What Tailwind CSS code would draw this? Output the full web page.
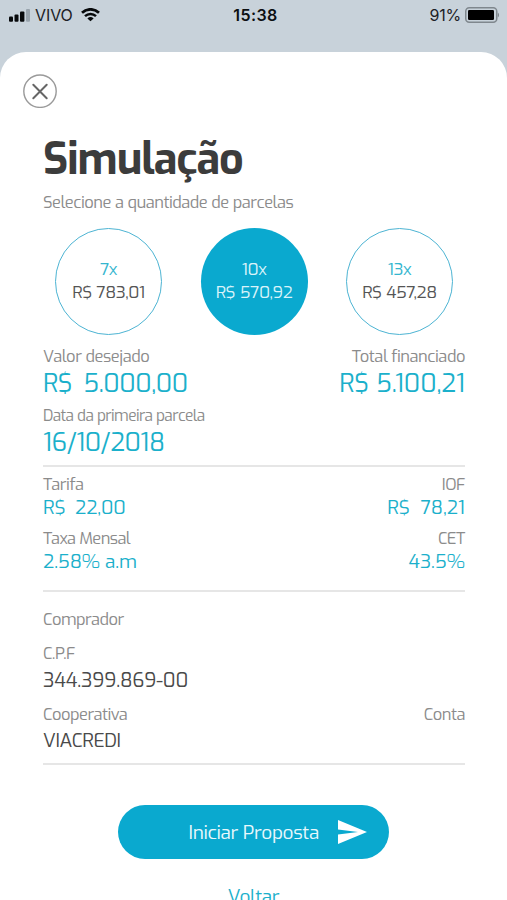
<!DOCTYPE html>
<html lang="pt-BR">
<head>
    <meta charset="UTF-8">
    <meta name="viewport" content="width=device-width, initial-scale=1.0">
    <title>Simulação</title>
    <script src="https://cdn.jsdelivr.net/npm/@tailwindcss/browser@4"></script>
</head>
<body class="h-[900px] overflow-hidden bg-[#c8d2da] font-[Exo,'Exo_2',Roboto,sans-serif] text-[#8b8b8b] antialiased">

    <!-- Status bar -->
    <header class="grid h-[52px] grid-cols-3 px-[8px] pt-[5px] font-[Inter,sans-serif] text-[16px] leading-5 text-[#1c2126]">
        <div class="flex h-5 items-center">
            <svg class="h-[14px] w-[22px]" viewBox="0 0 22 14">
                <rect x="1" y="8.5" width="4" height="5.2" rx="1" fill="#07090b"/>
                <rect x="6.5" y="6.5" width="4" height="7.2" rx="1" fill="#07090b"/>
                <rect x="12" y="3.5" width="4.4" height="10.2" rx="1" fill="#07090b"/>
                <rect x="18" y="1" width="4" height="12.7" rx="1" fill="#98a3ac"/>
            </svg>
            <span class="ml-[5px] tracking-[-0.1px]">VIVO</span>
            <svg class="ml-[8px] h-[14px] w-[19px]" viewBox="0 0 19 14">
                <path d="M1 4.7a12.3 12.3 0 0 1 17 0" fill="none" stroke="#07090b" stroke-width="2.7"/>
                <path d="M4 8.2a8 8 0 0 1 11 0" fill="none" stroke="#07090b" stroke-width="2.5"/>
                <path d="M9.5 13.3 6.4 10.4a4.5 4.5 0 0 1 6.2 0Z" fill="#07090b"/>
            </svg>
        </div>
        <div class="text-center font-semibold tracking-[0.4px] text-[#0c0f12]"><span class="pl-[4px]">15:38</span></div>
        <div class="flex h-5 items-center justify-end">
            <span class="tracking-[-0.2px]">91%</span>
            <svg class="ml-[4px] h-[16px] w-[34px]" viewBox="0 0 34 16">
                <rect x="0.75" y="0.75" width="31" height="14.5" rx="3.5" fill="none" stroke="#7f878d" stroke-width="1.5"/>
                <rect x="3" y="3" width="26" height="10" rx="1.2" fill="#000"/>
                <path d="M32.8 5.5c1.7.8 1.7 4.2 0 5Z" fill="#7f878d"/>
            </svg>
        </div>
    </header>

    <main class="h-[848px] rounded-t-[26px] bg-white pt-[22px]">
        <button class="ml-[23px] block size-[34px]" aria-label="Fechar">
            <svg class="size-[34px]" viewBox="0 0 34 34" fill="none">
                <circle cx="17" cy="17.2" r="16.2" stroke="#9a9a9a" stroke-width="1.4"/>
                <path d="M10.3 10.8 23.7 24.2M23.7 10.8 10.3 24.2" stroke="#666" stroke-width="2" stroke-linecap="round"/>
            </svg>
        </button>

        <div class="pt-[28px] pr-[42px] pl-[43px]">
            <h1 class="h-[48px] text-[43px] leading-[48px] font-bold tracking-[-1px] text-[#3c3c3c]">Simulação</h1>
            <p class="mt-[8px] h-5 text-[16.5px] leading-5 tracking-[-0.48px] whitespace-nowrap">Selecione a quantidade de parcelas</p>

            <!-- Parcelas -->
            <div class="mt-[16px] flex justify-between px-[12px] text-[17px] leading-[23px] tracking-[-0.4px] text-[#555]">
                <div class="flex size-[107px] flex-col items-center justify-center rounded-full border-[1.5px] border-[#4db4d3] pb-px">
                    <span class="text-[#35b6cf]">7x</span>
                    <span>R$ 783,01</span>
                </div>
                <div class="flex size-[107px] flex-col items-center justify-center rounded-full bg-[#0aa9cf] pb-px text-[#d9f3fa]">
                    <span>10x</span>
                    <span>R$ 570,92</span>
                </div>
                <div class="flex size-[107px] flex-col items-center justify-center rounded-full border-[1.5px] border-[#4db4d3] pb-px">
                    <span class="text-[#35b6cf]">13x</span>
                    <span>R$ 457,28</span>
                </div>
            </div>

            <!-- Valores -->
            <section class="h-[132px] border-b-2 border-[#e6e6e6] pt-[11px] text-[16.5px] leading-5 tracking-[-0.45px]">
                <div class="flex justify-between">
                    <div>
                        <p>Valor desejado</p>
                        <p class="mt-[4px] text-[25px] leading-7 tracking-[-0.4px] [word-spacing:-1px] whitespace-pre text-[#1bb0cb]">R$  5.000,00</p>
                    </div>
                    <div class="text-right">
                        <p>Total financiado</p>
                        <p class="mt-[4px] text-[25px] leading-7 tracking-[-0.1px] text-[#1bb0cb]">R$ 5.100,21</p>
                    </div>
                </div>
                <p class="mt-[8px] text-[15.5px] tracking-[-0.58px]">Data da primeira parcela</p>
                <p class="mt-[3px] text-[25px] leading-7 tracking-[-0.5px] text-[#1bb0cb]">16/10/2018</p>
            </section>

            <!-- Taxas -->
            <section class="h-[125px] border-b-2 border-[#e6e6e6] pt-[7px] text-[16.5px] leading-5 tracking-[-0.45px]">
                <div class="flex justify-between">
                    <div>
                        <p>Tarifa</p>
                        <p class="mt-px text-[19px] leading-[26px] tracking-[-0.1px] [word-spacing:-0.5px] whitespace-pre text-[#1bb0cb]">R$  22,00</p>
                    </div>
                    <div class="text-right">
                        <p>IOF</p>
                        <p class="mt-px text-[19px] leading-[26px] tracking-normal whitespace-pre text-[#1bb0cb]">R$  78,21</p>
                    </div>
                </div>
                <div class="mt-[7px] flex justify-between">
                    <div>
                        <p class="tracking-[-0.6px]">Taxa Mensal</p>
                        <p class="mt-px text-[19px] leading-[26px] tracking-[-0.1px] text-[#1bb0cb]">2.58% a.m</p>
                    </div>
                    <div class="text-right">
                        <p>CET</p>
                        <p class="mt-px text-[19px] leading-[26px] tracking-normal text-[#1bb0cb]">43.5%</p>
                    </div>
                </div>
            </section>

            <!-- Comprador -->
            <section class="h-[173px] border-b-2 border-[#e6e6e6] pt-[17px] text-[16.5px] leading-5 tracking-[-0.5px]">
                <h2>Comprador</h2>
                <p class="mt-[14px]">C.P.F</p>
                <p class="mt-[4px] text-[19.5px] leading-[26px] tracking-[-0.15px] text-[#4a4a4a]">344.399.869-00</p>
                <div class="mt-[11px] flex justify-between">
                    <p>Cooperativa</p>
                    <p>Conta</p>
                </div>
                <p class="mt-[4px] text-[19px] leading-[26px] tracking-[-0.4px] text-[#4a4a4a]">VIACREDI</p>
            </section>
        </div>

        <button class="mx-auto mt-[40px] flex h-[54px] w-[271px] items-center justify-end rounded-full bg-[#0aa9cf] pr-[22px] text-[19px] tracking-[-0.35px] text-[#e8f8fc]">
            <span class="pt-[2px]">Iniciar Proposta</span>
            <svg class="ml-[19px] h-[24px] w-[29px]" viewBox="0 0 29 24">
                <path d="M0 0 29 12 0 24V14.4L20 12 0 9.6Z" fill="#fff"/>
            </svg>
        </button>
        <a class="mt-[25px] block text-center text-[19px] leading-[26px] tracking-[-0.4px] text-[#1bb0cb]">Voltar</a>
    </main>

</body>
</html>
